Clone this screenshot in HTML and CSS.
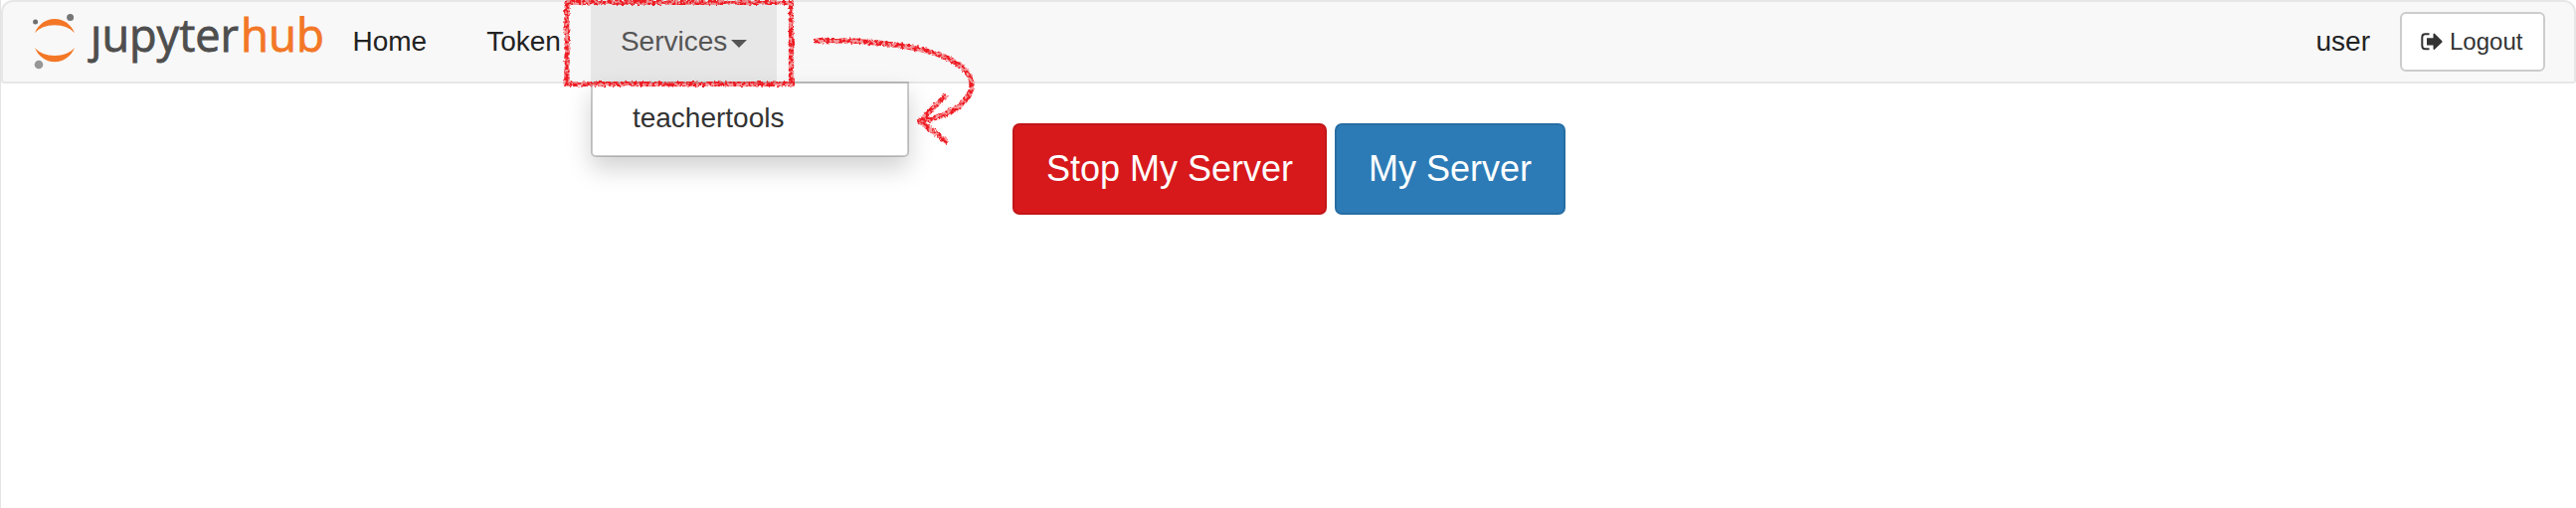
FILE: index.html
```html
<!DOCTYPE html>
<html lang="en">
<head>
<meta charset="utf-8">
<title>JupyterHub</title>
<link rel="stylesheet" href="styles.css">
</head>
<body>
<nav class="navbar">
  <a class="brand" href="#" aria-label="jupyterhub">
    <svg class="logo" width="300" height="80" viewBox="30 2 300 80">
      <g fill="#f37726">
        <path d="M35 33.2C38.500 24.500 46 19 55 19S71.500 24.500 75 33.200C70.500 28 63.500 25.200 55 25.200S39.500 28 35 33.200Z"/>
        <path d="M35 48C38.500 56.700 46 62.200 55 62.200S71.500 56.700 75 48C70.500 53.200 63.500 56 55 56S39.500 53.200 35 48Z"/>
      </g>
      <circle cx="35.600" cy="22" r="2.500" fill="#6f6f6f"/>
      <circle cx="70.600" cy="17.600" r="3.500" fill="#767677"/>
      <circle cx="39" cy="65" r="4.300" fill="#989798"/>
      <text class="wordmark" x="91" y="52" textLength="149" lengthAdjust="spacingAndGlyphs" fill="#4e4e4e" stroke="#4e4e4e">ȷupyter</text>
      <text class="wordmark" x="242" y="52" textLength="84" lengthAdjust="spacingAndGlyphs" fill="#f37726" stroke="#f37726">hub</text>
    </svg>
  </a>
  <ul class="nav">
    <li><a class="link" href="#">Home</a></li>
    <li><a class="link" href="#">Token</a></li>
    <li class="dropdown">
      <a class="link open" href="#">Services<span class="caret"></span></a>
      <ul class="menu"><li><a class="item" href="#">teachertools</a></li></ul>
    </li>
  </ul>
  <div class="account">
    <span class="user">user</span>
    <a class="logout" href="#">
      <svg class="logout-icon" width="22" height="18" viewBox="0 0 22 18">
        <path d="M8.500 1.300H4.500Q1.300 1.300 1.300 4.500V13Q1.300 16.200 4.500 16.200H8.500" fill="none" stroke="#333" stroke-width="2"/>
        <path d="M6 5.200H12.500V1Q13 .2 13.800 .8L21.400 8.200Q21.800 8.800 21.400 9.400L13.800 16.800Q13 17.400 12.500 16.600V12.400H6Z" fill="#333"/>
      </svg>Logout</a>
  </div>
</nav>
<main class="actions">
  <a class="btn danger" href="#">Stop My Server</a>
  <a class="btn primary" href="#">My Server</a>
</main>
<svg class="marks" width="460" height="160" viewBox="560 0 460 160">
  <defs>
    <filter id="crayon" color-interpolation-filters="sRGB" filterUnits="userSpaceOnUse" x="560" y="-5" width="460" height="165">
      <feTurbulence type="fractalNoise" baseFrequency=".32" numOctaves="2" seed="4" result="noise"/>
      <feDisplacementMap in="SourceGraphic" in2="noise" scale="4" xChannelSelector="R" yChannelSelector="G" result="rough"/>
      <feColorMatrix in="noise" type="matrix" values="0 0 0 0 0  0 0 0 0 0  0 0 0 0 0  0 0 7 0 -2.9" result="grain"/>
      <feComposite in="rough" in2="grain" operator="in" result="specks"/>
      <feComponentTransfer in="rough" result="base"><feFuncA type="linear" slope=".45"/></feComponentTransfer>
      <feMerge><feMergeNode in="base"/><feMergeNode in="specks"/></feMerge>
    </filter>
  </defs>
  <g fill="none" stroke="#ed1c24" stroke-width="5.200" stroke-linecap="round" stroke-linejoin="round" filter="url(#crayon)">
    <path d="M570 2.500H795.500V84.500H570Z"/>
    <path d="M820.500 41C870 39 915 46 942 54C966 63 977 74 977 86C976 103 955 117 925 122"/>
    <path d="M950 97L925 122L951 142"/>
  </g>
</svg>
</body>
</html>
```
FILE: styles.css
```css
* { box-sizing: border-box; }
body {
  margin: 0;
  min-height: 511px;
  padding-left: 1px;
  background: linear-gradient(#e4e4e4, #e4e4e4) left / 1px 100% no-repeat #fff;
  font-family: "Liberation Sans", Arial, sans-serif;
  font-size: 28px;
  color: #333;
  overflow: hidden;
}
a { color: inherit; text-decoration: none; }
ul { margin: 0; padding: 0; list-style: none; }
.navbar {
  display: flex;
  height: 84px;
  border: 2px solid #e7e7e7;
  border-radius: 12px 12px 3px 3px;
  background: #f8f8f8;
}
.brand { width: 321.500px; padding-left: 27px; }
.logo { display: block; }
.wordmark { font-family: "Open Sans", "Noto Sans", sans-serif; font-size: 45px; stroke-width: .8px; }
.nav { display: flex; color: #222; }
.link { display: flex; align-items: center; height: 80px; padding: 0 30px; }
.open { background: #e7e7e7; color: #555; }
.caret {
  margin-left: 4px;
  border-top: 8px solid;
  border-left: 8px solid transparent;
  border-right: 8px solid transparent;
  position: relative;
  top: 2px;
}
.dropdown { position: relative; }
.menu {
  position: absolute;
  top: 80px;
  left: 0;
  width: 320px;
  height: 76px;
  padding: 10px 0;
  border: 2px solid rgba(0, 0, 0, .2);
  border-radius: 0 0 5px 5px;
  background: #fff;
  background-clip: padding-box;
  box-shadow: 0 12px 24px rgba(0, 0, 0, .175);
  color: #333;
}
.item { display: block; padding: 0 40px; line-height: 50px; }
.account { display: flex; align-items: center; gap: 30px; margin-left: auto; padding-right: 29px; }
.user { color: #222; }
.logout {
  display: flex;
  align-items: center;
  width: 146px;
  height: 60px;
  padding-left: 19px;
  border: 2px solid #ccc;
  border-radius: 6px;
  background: #fff;
  font-size: 24px;
}
.logout-icon { margin-right: 7px; }
.actions { display: flex; justify-content: center; gap: 8px; padding: 40px 0 0 1px; }
.btn {
  height: 92px;
  padding: 0 32px;
  border: 2px solid;
  border-radius: 7px;
  color: #fff;
  font-size: 36px;
  line-height: 88px;
}
.danger { background: #d7191c; border-color: #c11619; }
.primary { background: #2c7bb6; border-color: #276da2; }
.marks { position: absolute; left: 560px; top: 0; pointer-events: none; }
```
